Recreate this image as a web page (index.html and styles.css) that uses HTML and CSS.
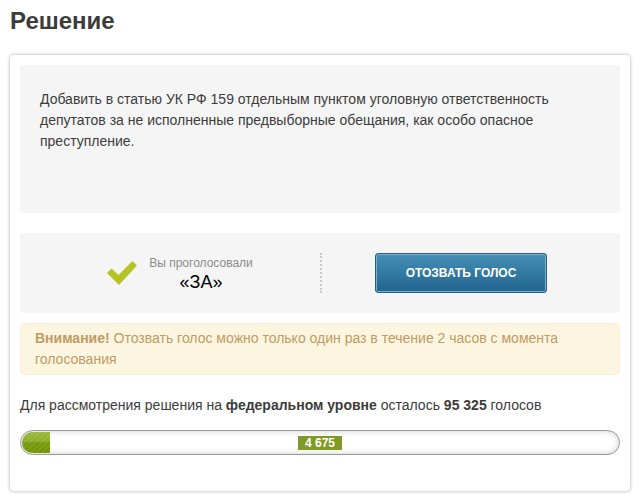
FILE: index.html
```html
<!DOCTYPE html>
<html lang="ru">
  <head>
    <meta charset="UTF-8" />
    <meta name="viewport" content="width=device-width, initial-scale=1.0" />
    <title>Решение</title>

    <link rel="stylesheet" href="styles.css">
  </head>
  <body>
    <h1 class="title">Решение</h1>

    <main class="card">
      <div class="decision">
        <p>Добавить в статью УК РФ 159 отдельным пунктом уголовную ответственность депутатов за не исполненные предвыборные обещания, как особо опасное преступление.</p>
      </div>

      <div class="vote">
        <div class="vote-status">
          <svg class="check" viewBox="0 0 30 24" aria-hidden="true">
            <path d="M0 12 L4.5 7.5 L11.5 14 L25.5 0 L30 4.5 L12 24 Z" fill="#b5c424" />
          </svg>
          <div class="vote-text">
            <span class="vote-label">Вы проголосовали</span>
            <span class="vote-value">«ЗА»</span>
          </div>
        </div>
        <div class="vote-action">
          <button class="btn" type="button">Отозвать голос</button>
        </div>
      </div>

      <div class="alert">
        <strong>Внимание!</strong> Отозвать голос можно только один раз в течение 2 часов с момента голосования
      </div>

      <p class="remaining">Для рассмотрения решения на <strong>федеральном уровне</strong> осталось <strong>95 325</strong> голосов</p>

      <div class="progress">
        <div class="progress-bar" style="width: 4.675%"></div>
        <span class="progress-count">4 675</span>
      </div>
    </main>
  </body>
</html>
```

FILE: styles.css
```css
*,
*::before,
*::after {
  box-sizing: border-box;
  margin: 0;
  padding: 0;
}

body {
  padding: 8px 9px 8px 10px;
  background-color: #fff;
  color: #3c3c3b;
  font-family: "Liberation Sans", Arial, sans-serif;
  font-size: 14px;
  line-height: 21px;
}

.title {
  margin-bottom: 21px;
  font-size: 24px;
  line-height: 26px;
}

.card {
  padding: 10px 10px 36px;
  border-radius: 4px;
  background-color: #fff;
  box-shadow: 0 0 3px 1px #ccc;
}

.decision {
  min-height: 148px;
  margin-bottom: 20px;
  padding: 24px 60px 20px 20px;
  border-radius: 3px;
  background-color: #f5f5f5;
}

.vote {
  display: grid;
  grid-template-columns: 1fr 1fr;
  margin-bottom: 10px;
  padding: 20px;
  border-radius: 3px;
  background-color: #f5f5f5;
}

.vote-status,
.vote-action {
  display: flex;
  align-items: center;
  justify-content: center;
}

.vote-status {
  gap: 12px;
}

.vote-action {
  border-left: 2px dotted #c8c8c8;
}

.check {
  width: 30px;
  height: 24px;
}

.vote-text {
  display: flex;
  flex-direction: column;
  align-items: center;
}

.vote-label {
  color: #8c8c8c;
  font-size: 12px;
  line-height: 18px;
}

.vote-value {
  color: #000;
  font-size: 18px;
  line-height: 20px;
}

.btn {
  height: 40px;
  padding: 0 30px;
  border: 1px solid #235f85;
  border-radius: 3px;
  background: linear-gradient(#468fb6, #20658f);
  box-shadow: inset 0 0 0 1px #7db0cb;
  color: #fff;
  font: bold 12px "Liberation Sans", Arial, sans-serif;
  text-transform: uppercase;
  cursor: pointer;
}

.alert {
  margin-bottom: 20px;
  padding: 4px 50px 4px 14px;
  border: 1px solid #fbeed5;
  border-radius: 4px;
  background-color: #fcf6e0;
  color: #c09b63;
}

.remaining {
  margin-bottom: 14px;
}

.progress {
  position: relative;
  height: 25px;
  padding: 1px;
  border: 1px solid #999;
  border-radius: 13px;
  box-shadow: inset 0 0 6px #ccc;
  overflow: hidden;
}

.progress-bar {
  height: 100%;
  border-radius: 11px 0 0 11px;
  background:
    repeating-linear-gradient(135deg, rgba(255, 255, 255, 0.08) 0 2px, transparent 2px 4px),
    linear-gradient(#9ab83a, #8aab23 50%, #769a09 50%, #719306);
}

/* the counter lies over the track, centred */
.progress-count {
  position: absolute;
  top: 50%;
  left: 50%;
  padding: 0 7px;
  background-color: #7f9a27;
  color: #fff;
  font-size: 12px;
  font-weight: bold;
  line-height: 14px;
  transform: translate(-50%, -50%);
}
```
